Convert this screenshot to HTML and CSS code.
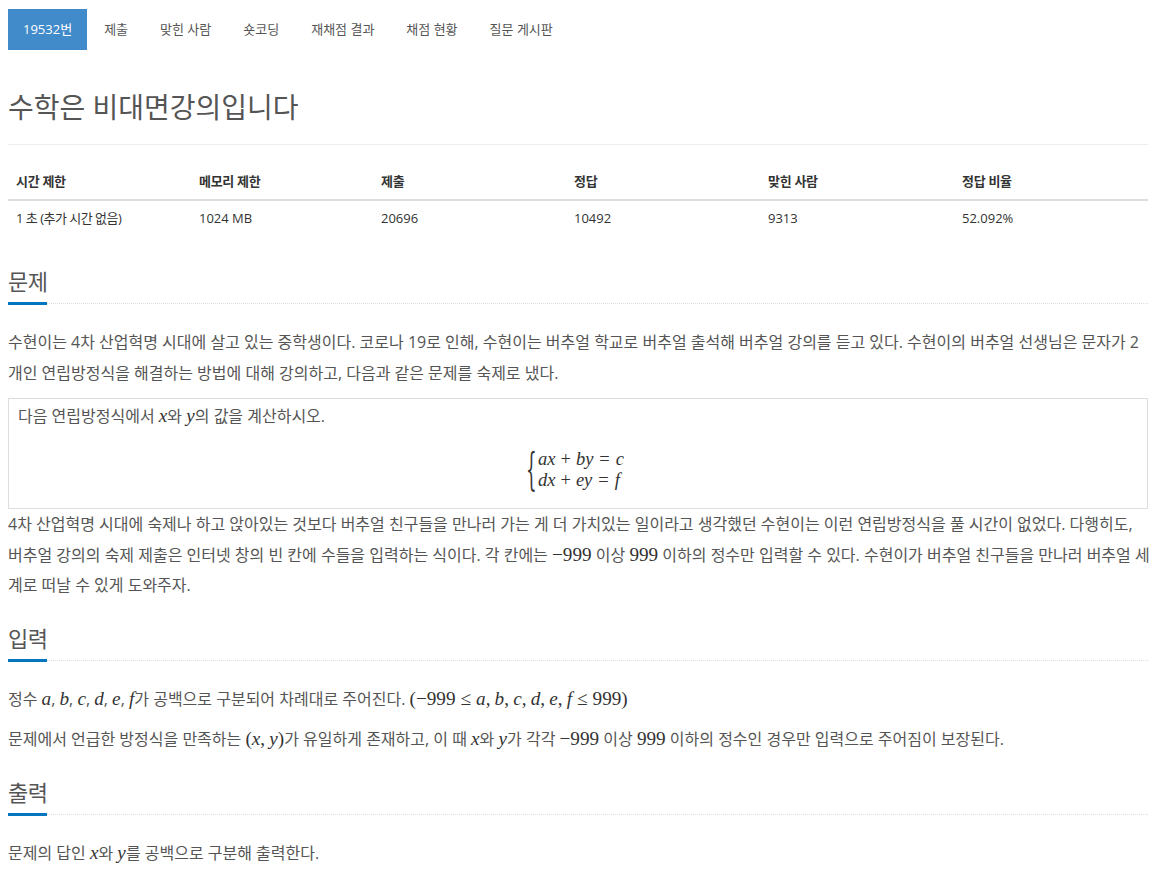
FILE: index.html
```html
<!DOCTYPE html>
<html lang="ko">
<head>
    <meta charset="UTF-8">
    <title>19532번: 수학은 비대면강의입니다</title>
    <link rel="stylesheet" href="styles.css">
</head>
<body>
    <div class="wrapper">
        <!-- 문제 메뉴 -->
        <ul class="problem-menu">
            <li class="active"><a href="#">19532번</a></li>
            <li><a href="#">제출</a></li>
            <li><a href="#">맞힌 사람</a></li>
            <li><a href="#">숏코딩</a></li>
            <li><a href="#">재채점 결과</a></li>
            <li><a href="#">채점 현황</a></li>
            <li><a href="#">질문 게시판</a></li>
        </ul>

        <!-- 제목 -->
        <div class="page-header">
            <h1 class="problem-title">수학은 비대면강의입니다</h1>
        </div>

        <!-- 문제 정보 -->
        <table class="problem-info">
            <thead>
                <tr>
                    <th class="c1">시간 제한</th>
                    <th class="c2">메모리 제한</th>
                    <th class="c3">제출</th>
                    <th class="c4">정답</th>
                    <th class="c5">맞힌 사람</th>
                    <th class="c6">정답 비율</th>
                </tr>
            </thead>
            <tbody>
                <tr>
                    <td class="ko">1 초 (추가 시간 없음)</td>
                    <td>1024 MB</td>
                    <td>20696</td>
                    <td>10492</td>
                    <td>9313</td>
                    <td>52.092%</td>
                </tr>
            </tbody>
        </table>

        <!-- 문제 -->
        <section class="problem-section">
            <h2 class="headline"><span>문제</span></h2>
            <p class="problem-text">수현이는 4차 산업혁명 시대에 살고 있는 중학생이다. 코로나 19로 인해, 수현이는 버추얼 학교로 버추얼 출석해 버추얼 강의를 듣고 있다. 수현이의 버추얼 선생님은 문자가 2<br>개인 연립방정식을 해결하는 방법에 대해 강의하고, 다음과 같은 문제를 숙제로 냈다.</p>
            <div class="quote-box">
                <p class="problem-text">다음 연립방정식에서 <span class="mi">x</span>와 <span class="mi">y</span>의 값을 계산하시오.</p>
                <div class="equation">
                    <span class="brace">{</span>
                    <div class="eq-rows">
                        <div class="eq-row"><span class="mi">ax</span><span class="mo">+</span><span class="mi">by</span><span class="mo rel">=</span><span class="mi">c</span></div>
                        <div class="eq-row"><span class="mi">dx</span><span class="mo">+</span><span class="mi">ey</span><span class="mo rel">=</span><span class="mi">f</span></div>
                    </div>
                </div>
            </div>
            <p class="problem-text">4차 산업혁명 시대에 숙제나 하고 앉아있는 것보다 버추얼 친구들을 만나러 가는 게 더 가치있는 일이라고 생각했던 수현이는 이런 연립방정식을 풀 시간이 없었다. 다행히도,<br>버추얼 강의의 숙제 제출은 인터넷 창의 빈 칸에 수들을 입력하는 식이다. 각 칸에는 <span class="mn">−999</span> 이상 <span class="mn">999</span> 이하의 정수만 입력할 수 있다. 수현이가 버추얼 친구들을 만나러 버추얼 세<br>계로 떠날 수 있게 도와주자.</p>
        </section>

        <!-- 입력 -->
        <section class="problem-section">
            <h2 class="headline"><span>입력</span></h2>
            <p class="problem-text">정수 <span class="mi">a</span>, <span class="mi">b</span>, <span class="mi">c</span>, <span class="mi">d</span>, <span class="mi">e</span>, <span class="mi">f</span>가 공백으로 구분되어 차례대로 주어진다. <span class="mn">(−999</span><span class="mo rel">≤</span><span class="mi">a</span><span class="mn">,</span> <span class="mi">b</span><span class="mn">,</span> <span class="mi">c</span><span class="mn">,</span> <span class="mi">d</span><span class="mn">,</span> <span class="mi">e</span><span class="mn">,</span> <span class="mi">f</span><span class="mo rel">≤</span><span class="mn">999)</span></p>
            <p class="problem-text">문제에서 언급한 방정식을 만족하는 <span class="mn">(</span><span class="mi">x</span><span class="mn">,</span> <span class="mi">y</span><span class="mn">)</span>가 유일하게 존재하고, 이 때 <span class="mi">x</span>와 <span class="mi">y</span>가 각각 <span class="mn">−999</span> 이상 <span class="mn">999</span> 이하의 정수인 경우만 입력으로 주어짐이 보장된다.</p>
        </section>

        <!-- 출력 -->
        <section class="problem-section">
            <h2 class="headline"><span>출력</span></h2>
            <p class="problem-text">문제의 답인 <span class="mi">x</span>와 <span class="mi">y</span>를 공백으로 구분해 출력한다.</p>
        </section>
    </div>
</body>
</html>
```

FILE: styles.css
```css
*{
    margin: 0;
    padding: 0;
    box-sizing: border-box;
}
body{
    font-family: "Open Sans", "Noto Sans CJK KR", sans-serif;
    color: #555;
    background-color: #fff;
}
/* 전체 영역 */
.wrapper{
    padding: 9px 1px 40px 8px;
}

/* 문제 메뉴 */
.problem-menu{
    list-style: none;
    display: flex;
}
.problem-menu li{
    margin-left: 2px;
}
.problem-menu li:first-child{
    margin-left: 0;
}
.problem-menu a{
    display: block;
    padding: 10px 15px;
    font-size: 13px;
    line-height: 21px;
    color: #555;
    text-decoration: none;
}
.problem-menu .active a{
    background-color: #428bca;
    color: #fff;
}

/* 제목 */
.page-header{
    margin-top: 39px;
    padding-bottom: 19px;
    border-bottom: 1px solid #eee;
    margin-bottom: 19px;
}
.problem-title{
    font-size: 28px;
    line-height: 36px;
    font-weight: normal;
    color: #555;
}

/* 문제 정보 표 */
.problem-info{
    width: 100%;
    border-collapse: collapse;
    table-layout: fixed;
    font-size: 13px;
    line-height: 19px;
    margin-bottom: 30px;
}
.problem-info th,
.problem-info td{
    text-align: left;
    padding: 8px;
}
.problem-info th{
    color: #333;
    font-weight: bold;
    letter-spacing: -0.3px;
    border-bottom: 2px solid #ddd;
}
.problem-info td{
    color: #333;
}
.problem-info td.ko{
    letter-spacing: -0.5px;
}
.c1{ width: 183px; }
.c2{ width: 182px; }
.c3{ width: 193px; }
.c4{ width: 194px; }
.c5{ width: 194px; }

/* 섹션 제목 */
.headline{
    display: flex;
    margin-top: 22px;
    margin-bottom: 23px;
    border-bottom: 1px dotted #ddd;
    font-size: 22px;
    font-weight: normal;
    letter-spacing: -0.5px;
    color: #555;
}
.problem-section:first-of-type .headline{
    margin-top: 0;
}
.headline span{
    line-height: 30px;
    padding-bottom: 6px;
    border-bottom: 3px solid #0076c0;
    margin-bottom: -2px;
}

/* 본문 */
.problem-text{
    font-size: 16px;
    line-height: 30.5px;
    margin-bottom: 10px;
    /* 줄바꿈은 br 로 정하고, 넘침은 허용 */
    margin-right: -8px;
    word-break: break-all;
}
.mi,
.mn,
.mo{
    font-family: "Liberation Serif", "DejaVu Serif", serif;
    font-size: 1.2em;
    line-height: 1;
    color: #333;
}
.mi{
    font-style: italic;
}
.mo{
    margin: 0 3px;
}
.mo.rel{
    margin: 0 5px;
}

/* 예시 상자 */
.quote-box{
    border: 1px solid #ddd;
    padding: 2px 9px 0;
    height: 111px;
}
.quote-box .problem-text{
    margin: 0;
}
.equation{
    display: flex;
    justify-content: center;
    align-items: center;
    margin-top: 17px;
    margin-left: -6px;
}
.brace{
    font-family: "DejaVu Serif", serif;
    font-size: 44px;
    line-height: 42px;
    width: 12px;
    color: #333;
    transform: scaleX(0.38);
    transform-origin: left center;
}
.eq-rows{
    display: flex;
    flex-direction: column;
}
.eq-row{
    line-height: 21px;
    white-space: nowrap;
}
.eq-row .mi,
.eq-row .mo{
    font-size: 18.5px;
}
.eq-row .mo{
    margin: 0 5px;
}
.eq-row .mo.rel{
    margin: 0 6px;
}
```
